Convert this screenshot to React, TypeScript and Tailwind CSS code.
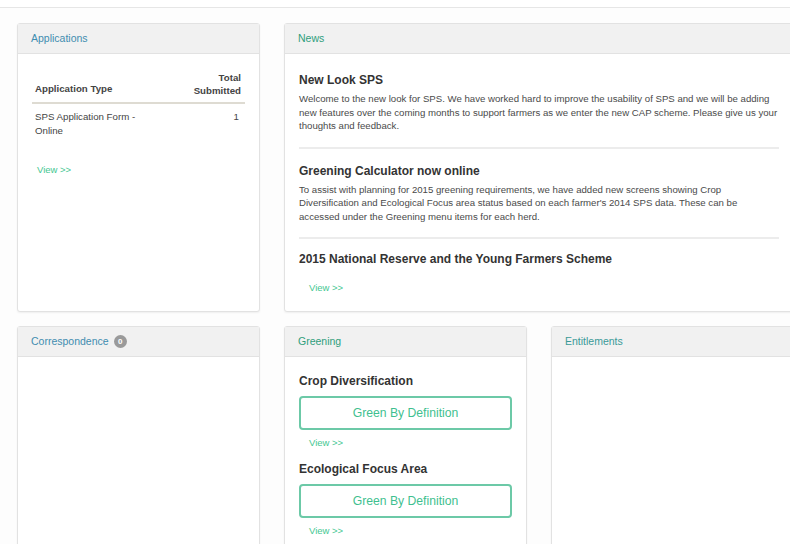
import React from 'react';

const Panel: React.FC<{
  title: React.ReactNode;
  titleColor: string;
  className?: string;
  children?: React.ReactNode;
}> = ({ title, titleColor, className = '', children }) => (
  <div className={`bg-white border border-[#e2e2e2] rounded-[3px] shadow-[0_1px_2px_rgba(0,0,0,0.06)] flex flex-col ${className}`}>
    <div className={`h-[30px] bg-[#f1f1f1] border-b border-[#e2e2e2] px-[13px] flex items-center text-[10.5px] ${titleColor}`}>
      {title}
    </div>
    <div className="flex-1 px-[14px]">{children}</div>
  </div>
);

const ViewLink: React.FC<{ className?: string }> = ({ className = '' }) => (
  <a className={`block text-[9.5px] text-[#45c792] ${className}`}>View &gt;&gt;</a>
);

const NewsItem: React.FC<{ title: string; lines?: string[]; first?: boolean; last?: boolean }> = ({ title, lines, first, last }) => (
  <div className={`${last ? 'pt-[13px]' : 'border-b-2 border-[#ececec] pb-[14px]'} ${first ? 'pt-[19px]' : last ? '' : 'pt-[15px]'}`}>
    <h3 className="text-[12px] font-bold text-[#333] leading-[14px]">{title}</h3>
    {lines && (
      <p className="text-[9.65px] text-[#4a4a4a] leading-[13.5px] mt-[5px] mr-[-3px] whitespace-nowrap">
        {lines.map((l, i) => (
          <React.Fragment key={i}>
            {l}
            {i < lines.length - 1 && <br />}
          </React.Fragment>
        ))}
      </p>
    )}
  </div>
);

const GreenBox: React.FC = () => (
  <div className="h-[34px] border-2 border-[#6cc9a7] rounded-[4px] flex items-center justify-center text-[12.2px] text-[#3fbf8f]">
    Green By Definition
  </div>
);

export default function App() {
  return (
    <div className="w-[790px] h-[544px] overflow-hidden bg-[#fdfdfd]" style={{ fontFamily: '"Liberation Sans", Arial, sans-serif' }}>
      <div className="h-[8px] border-b border-[#e6e6e6] bg-white" />
      <div className="grid grid-cols-[243px_243px_243px] gap-x-[24px] gap-y-[14px] pl-[17px] pt-[15px] grid-rows-[289px_240px]">
        <Panel title="Applications" titleColor="text-[#3f8db0]">
          <table className="w-full mt-[17px] text-[9.7px] text-[#444]">
            <thead>
              <tr className="border-b-2 border-[#dedbd2]">
                <th className="text-left font-bold align-bottom pb-[5px] pl-[3px]">Application Type</th>
                <th className="text-right font-bold align-bottom pb-[5px] pr-[4px] leading-[13px]">
                  Total<br />Submitted
                </th>
              </tr>
            </thead>
            <tbody>
              <tr>
                <td className="align-top pt-[6px] pl-[3px] leading-[14px]">SPS Application Form -<br />Online</td>
                <td className="align-top pt-[6px] pr-[6px] text-right leading-[14px]">1</td>
              </tr>
            </tbody>
          </table>
          <ViewLink className="mt-[25px] pl-[5px]" />
        </Panel>

        <Panel title="News" titleColor="text-[#2f9e7c]" className="col-span-2">
          <NewsItem
            first
            title="New Look SPS"
            lines={[
              'Welcome to the new look for SPS. We have worked hard to improve the usability of SPS and we will be adding',
              'new features over the coming months to support farmers as we enter the new CAP scheme. Please give us your',
              'thoughts and feedback.',
            ]}
          />
          <NewsItem
            title="Greening Calculator now online"
            lines={[
              'To assist with planning for 2015 greening requirements, we have added new screens showing Crop',
              "Diversification and Ecological Focus area status based on each farmer's 2014 SPS data. These can be",
              'accessed under the Greening menu items for each herd.',
            ]}
          />
          <NewsItem title="2015 National Reserve and the Young Farmers Scheme" last />
          <ViewLink className="pl-[10px] mt-[15px]" />
        </Panel>

        <Panel
          title={
            <span className="flex items-center gap-[5px]">
              Correspondence
              <span className="w-[13px] h-[13px] rounded-full bg-[#9a9a9a] text-white text-[8px] font-bold flex items-center justify-center">0</span>
            </span>
          }
          titleColor="text-[#3f8db0]"
        />

        <Panel title="Greening" titleColor="text-[#2f9e7c]">
          <h3 className="text-[12px] font-bold text-[#333] mt-[15px] mb-[6px]">Crop Diversification</h3>
          <GreenBox />
          <ViewLink className="pl-[10px] mt-[6px]" />
          <h3 className="text-[12px] font-bold text-[#333] mt-[10px] mb-[6px]">Ecological Focus Area</h3>
          <GreenBox />
          <ViewLink className="pl-[10px] mt-[6px]" />
        </Panel>

        <Panel title="Entitlements" titleColor="text-[#3a9a98]" />
      </div>
    </div>
  );
}
